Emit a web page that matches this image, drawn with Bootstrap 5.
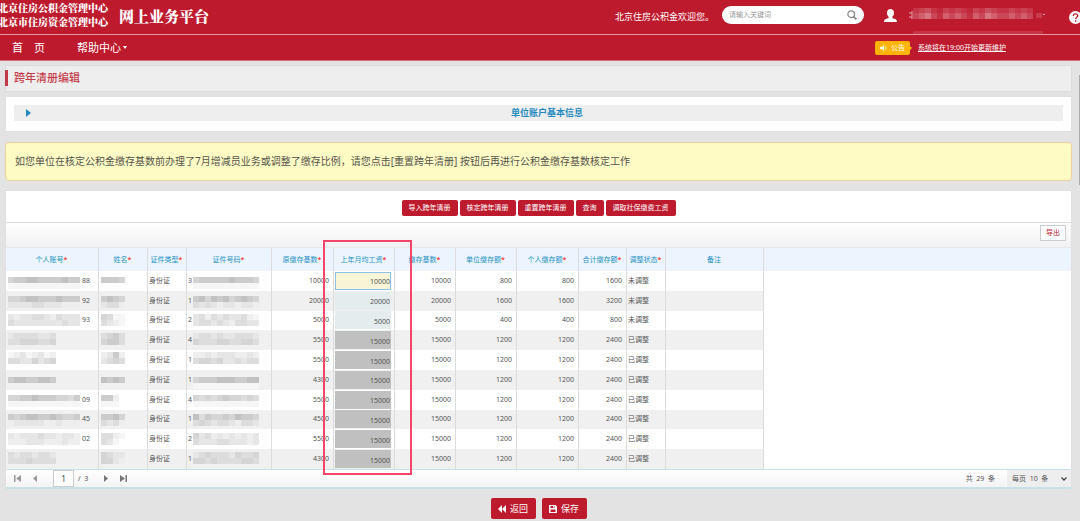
<!DOCTYPE html>
<html lang="zh-CN">
<head>
<meta charset="utf-8">
<meta name="viewport" content="width=device-width, initial-scale=1">
<title>跨年清册编辑</title>
<link href="https://cdn.jsdelivr.net/npm/bootstrap@5.3.0/dist/css/bootstrap.min.css" rel="stylesheet">
<style>
  :root { --red: #bd1a2d; --text: #555; --line: #dcdcdc; --pale: #c9e1ea; }
  body { background: #e3e3e3; color: var(--text); overflow-x: hidden; font: 7px/16px "Noto Sans", "Noto Sans CJK SC", sans-serif; }
  .masthead { background: var(--red); color: #fff; height: 35px; border-bottom: 1px solid #e59aa2; overflow: hidden; }
  .org { font: 900 10px/14px "Noto Serif CJK SC", "Noto Sans CJK SC", serif; margin: -4px 0 0 -2px; white-space: nowrap; }
  .platform { font: 900 15px/20px "Noto Serif CJK SC", "Noto Sans CJK SC", serif; white-space: nowrap; margin: -3px 0 0 11px; }
  .greeting { font-size: 9px; white-space: nowrap; width: 107px; }
  .searchbox { width: 142px; height: 18px; background: #fff; border-radius: 9px; padding: 0 7px; }
  .searchbox input { font-size: 7px; line-height: 16px; min-width: 0; }
  .searchbox input::placeholder { color: #999; opacity: 1; }
  .helpmark { margin: 0 -2px 0 20px; }
  .mainnav { background: var(--red); height: 26px; border-bottom: 1px solid #d0707b; }
  .mainnav a { color: #fff; font-size: 11px; line-height: 16px; text-decoration: none; white-space: nowrap; }
  .mainnav .notice { font-size: 7px; text-decoration: underline; width: 162px; }
  .tag-notice { background: #ffb400; color: #fff; border-radius: 2px; width: 35px; height: 14px; line-height: 14px; position: relative; }
  .tag-notice::after { content: ""; position: absolute; left: 35px; top: 5px; border: 2px solid transparent; border-left-color: #ffb400; }
  .caret-s { border: 2px solid transparent; border-top: 3px solid #fff; border-bottom: 0; margin-left: 2px; }
  .keep-space { white-space: pre; }
  .page-body { padding: 4px 8px 0 5px; }
  .titlebar { background: #eee; border: 1px solid #dcdcdc; height: 27px; padding-top: 4px; }
  .titlebar h1 { color: var(--red); opacity: .85; font-size: 11px; line-height: 16px; border-left: 3px solid var(--red); padding-left: 6px; margin: 0 0 0 -1px; }
  .panel { background: #fff; border: 1px solid #e0e0e0; }
  .fold { background: #eee; color: #1f8abf; font-size: 9px; font-weight: 700; line-height: 16px; height: 16px; margin-bottom: 2px; }
  .tip { background: #fffbc4; border: 1px solid #f0cfa0; border-radius: 4px; height: 39px; margin: 10px 0 9px; padding: 0 0 2px 9px; font-size: 10px; color: #55554c; }
  .actions { gap: 2px; padding: 9px 0 6px; }
  .red-btn { background: var(--red); color: #fff; border: 0; border-radius: 2px; padding: 0 7px; height: 16px; line-height: 16px; }
  .big-btn { width: 45px; height: 21px; font-size: 9px; padding: 0; }
  .footer-actions { gap: 6px; margin-top: 9px; padding-bottom: 2px; }
  .toolbar { height: 26px; border-top: 1px solid #ddd; border-bottom: 1px solid #e8e8e8; background: linear-gradient(#fff, #f1f1f3); padding: 0 5px 4px 0; }
  .export { border: 1px solid #ccc; background: #fff; color: var(--red); width: 26px; height: 16px; line-height: 14px; padding: 0; }
  .gridwrap { background: linear-gradient(#ecf5fd 23px, #fff 23px); }
  .ledger { table-layout: fixed; border-collapse: separate; border-spacing: 0; width: 758px; height: 221px; color: var(--text); }
  .ledger th { color: #2592c4; font-weight: 400; text-align: center; height: 23px; }
  .ledger th i { color: red; font-style: normal; }
  .ledger th, .ledger td { padding: 0 2px 0 1px; border-right: 1px solid var(--line); white-space: nowrap; overflow: hidden; }
  .ledger tbody tr { background: #fff; }
  .ledger tbody tr:nth-child(even) { background: #f0f0f0; }
  .ledger td.num { text-align: right; padding-right: 4px; }
  .ledger input { display: block; width: 56px; height: 18px; padding: 2px 1px 0 0; border: 0; text-align: right; background: #e4ecee; color: inherit; }
  .ledger input:disabled { background: #c0c0c0; }
  .ledger input.active { background: #f7f5d6; border: 1px solid #8ec1ea; padding: 2px 0 0; }
  .pager { height: 20px; border: 1px solid var(--pale); border-width: 1px 0 2px; background: linear-gradient(#fff, #f3f3f3); }
  .pager button { border: 0; background: none; padding: 0; line-height: 0; }
  .pager input { width: 21px; height: 17px; border: 1px solid #ccc; text-align: center; font-size: 9px; padding: 0; color: var(--text); }
  .pager select { appearance: none; border: 0; background: #eee; height: 17px; width: 64px; padding: 0 5px; color: var(--text); }
  .frame-mark { position: absolute; left: 317px; top: 18px; width: 89px; height: 235px; border: 2px solid #f5456a; pointer-events: none; }
  .scroll-thumb { position: absolute; right: 0; top: 75px; width: 1px; height: 110px; background: #aaa; }
  svg { display: block; flex: none; }
</style>
</head>
<body>
<header class="masthead d-flex align-items-center">
  <div class="org">北京住房公积金管理中心<br>北京市住房资金管理中心</div>
  <div class="platform">网上业务平台</div>
  <div class="greeting ms-auto">北京住房公积金欢迎您。</div>
  <label class="searchbox d-flex align-items-center mb-1">
    <input class="border-0 bg-transparent p-0 flex-grow-1" type="search" placeholder="请输入关键词" aria-label="搜索">
    <svg width="10" height="10" viewBox="0 0 10 10" fill="none" stroke="#888" stroke-width="1.3"><circle cx="4.2" cy="4.2" r="3.3"/><path d="M6.6 6.6 9.4 9.4" stroke-width="1.8"/></svg>
  </label>
  <svg class="ms-3 me-2 px-1 mb-1" width="21" height="13" viewBox="0 0 13 13" fill="#fff"><path d="M6.500 0C8.500 0 10 1.500 10 3.800 10 5.600 9.300 7 8.300 7.900V9l3.300 1.300C12.700 10.800 13 12 13 13H0c0-1 .3-2.200 1.400-2.700L4.700 9V7.900C3.700 7 3 5.600 3 3.800 3 1.500 4.500 0 6.500 0Z"/></svg>
  <svg id="userMask" width="140" height="34" aria-hidden="true"></svg>
  <svg class="helpmark" width="13" height="13" viewBox="0 0 13 13"><circle cx="6.500" cy="6.500" r="6.500" fill="#fff"/><path d="M4.300 5C4.300 3.500 5.200 2.800 6.500 2.800S8.800 3.600 8.800 4.800C8.800 6.200 6.600 6.300 6.600 8.100M6.600 9.300V10.700" fill="none" stroke="#bd1a2d" stroke-width="1.300"/></svg>
</header>
<nav class="mainnav d-flex align-items-center">
  <a href="#" class="ms-2 ps-1 keep-space">首　页</a>
  <a href="#" class="ms-4 ps-2 d-flex align-items-center">帮助中心<span class="caret-s"></span></a>
  <span class="tag-notice ms-auto me-2 d-flex align-items-center justify-content-center gap-1">
    <svg width="7" height="6" viewBox="0 0 7 6"><path d="M0 2h1.500L4 0v6L1.500 4H0Z" fill="#fff"/><path d="M5 1.200Q7 3 5 4.800" fill="none" stroke="#fff" stroke-width=".8"/></svg>公告</span>
  <a href="#" class="notice">系统将在19:00开始更新维护</a>
</nav>
<main class="page-body">
  <div class="titlebar"><h1>跨年清册编辑</h1></div>
  <section class="panel mt-1 px-2 pt-2 pb-2">
    <div class="fold d-flex align-items-center">
      <svg class="ms-2 ps-1" width="9" height="8" viewBox="0 0 5 8"><path d="M0 0 5 4 0 8Z" fill="#1f8abf"/></svg>
      <span class="flex-grow-1 text-center">单位账户基本信息</span>
    </div>
  </section>
  <div class="tip d-flex align-items-center" role="alert">如您单位在核定公积金缴存基数前办理了7月增减员业务或调整了缴存比例，请您点击[重置跨年清册] 按钮后再进行公积金缴存基数核定工作</div>
  <section class="panel border-bottom-0">
    <div class="d-flex justify-content-center actions">
      <button class="red-btn">导入跨年清册</button>
      <button class="red-btn">核定跨年清册</button>
      <button class="red-btn">重置跨年清册</button>
      <button class="red-btn">查询</button>
      <button class="red-btn">调取社保缴费工资</button>
    </div>
    <div class="position-relative">
      <div class="toolbar d-flex align-items-center justify-content-end"><button class="export">导出</button></div>
      <div class="gridwrap">
        <table class="ledger">
          <colgroup id="cols"></colgroup>
          <thead><tr>
            <th>个人账号<i>*</i></th><th>姓名<i>*</i></th><th>证件类型<i>*</i></th><th>证件号码<i>*</i></th><th>原缴存基数<i>*</i></th><th>上年月均工资<i>*</i></th><th>缴存基数<i>*</i></th><th>单位缴存额<i>*</i></th><th>个人缴存额<i>*</i></th><th>合计缴存额<i>*</i></th><th>调整状态<i>*</i></th><th>备注</th>
          </tr></thead>
          <tbody id="rows"></tbody>
        </table>
      </div>
      <div class="frame-mark"></div>
      <div class="pager d-flex align-items-center">
        <button class="ms-1 ps-1" aria-label="首页"><svg width="7" height="7" fill="#999"><path d="M0 0h1.500v7H0zM7 0v7L2 3.500z"/></svg></button>
        <button class="ms-2 ps-1" aria-label="上一页"><svg width="4" height="7" fill="#999"><path d="M4 0v7L0 3.500z"/></svg></button>
        <input class="ms-3" value="1" aria-label="页码">
        <span class="ms-1 me-3 keep-space">/  3</span>
        <button aria-label="下一页"><svg width="4" height="7" fill="#777"><path d="M0 0v7L4 3.500z"/></svg></button>
        <button class="ms-2 ps-1" aria-label="末页"><svg width="7" height="7" fill="#777"><path d="M0 0v7L5 3.500zM5.500 0H7v7H5.500z"/></svg></button>
        <span class="ms-auto me-2 pe-1 keep-space">共  29  条</span>
        <span class="position-relative">
          <select aria-label="每页条数"><option>每页&nbsp; 10&nbsp; 条</option></select>
          <svg class="position-absolute end-0 top-50 translate-middle-y me-1" width="6" height="4" fill="none" stroke="#444" stroke-width="1.300"><path d="M.5.5 3 3 5.500.5"/></svg>
        </span>
      </div>
    </div>
  </section>
  <div class="d-flex justify-content-center footer-actions">
    <button class="red-btn big-btn d-flex align-items-center justify-content-center gap-1"><svg width="8" height="8" fill="#fff"><path d="M4 0v8L0 4zM8 0v8L4 4z"/></svg>返回</button>
    <button class="red-btn big-btn d-flex align-items-center justify-content-center gap-1"><svg width="8" height="8" fill="#fff" fill-rule="evenodd"><path d="M0 0h6.500L8 1.500V8H0zM1.500 1v2h4V1zM1.500 4.500V7h5V4.500z"/><path d="M4 1h1v1.500H4z"/></svg>保存</button>
  </div>
</main>
<div class="scroll-thumb"></div>
<script src="https://cdn.jsdelivr.net/npm/bootstrap@5.3.0/dist/js/bootstrap.bundle.min.js"></script>
<script>
  // Shades for masked personal data, darkest to lightest; "." leaves a gap.
  const shade = { a: '#c2c2c2', b: '#cccccc', c: '#d5d5d5', d: '#dddddd', e: '#e6e6e6', f: '#eeeeee', g: '#f6f6f6' };
  const mask = (lines, top, width) => `<svg width="${width}" height="18" aria-hidden="true">` + lines.map((line, r) =>
    [...line].map((c, i) => shade[c] ? `<rect x="${1 + i * 6}" y="${top + r * 6}" width="6" height="6" fill="${shade[c]}"/>` : '').join('')).join('') + '</svg>';

  document.getElementById('cols').innerHTML =
    [93, 49, 39, 85, 62, 61, 61, 61, 62, 48, 39, 98].map(w => `<col style="width:${w}px">`).join('');

  // account mask, account tail, name mask, id first digit, id mask, mask top, old base, wage, share, total
  const data = [
    [['cbbaabbbbabb', 'gggggggggggg'], '88', ['bbbc'], '3', ['cbbbbbabbbc', 'ggggggggggg'], 5, 10000, 10000, 800, 1600],
    [['ccbaabbbabbb', 'eeeeddeeefff'], '92', ['babc', 'eddf'], '1', ['bacabacbabc', 'dedefeefeef'], 4, 20000, 20000, 1600, 3200],
    [['efeeddefdeee', 'deeeeeeeedee'], '93', ['cdgg', 'defg'], '2', ['edfdedeedfg', 'eddedefddee'], 3, 5000, 5000, 400, 800],
    [['eddddeed', 'ddcccddc'], '', ['dcbd', 'cbbd'], '4', ['eddedeeddde', 'cdddccddccd'], 2, 5500, 15000, 1200, 2400],
    [['gfegfegf', 'ddeecedc'], '', ['febf', 'edcd'], '1', ['ffefeeeffef', 'dccdceededd'], 1, 5500, 15000, 1200, 2400],
    [['baabbaab'], '', ['abab'], '1', ['cbbbaaabbaa', 'ggggggggggg'], 6, 4300, 15000, 1200, 2400],
    [['ccbbabbbccdb', 'gggggggggggg'], '09', ['bbf.', 'ggg.'], '4', ['cdcdcbccdcd', 'ggggggggggg'], 4, 5500, 15000, 1200, 2400],
    [['bcbaabbabccb', 'feeeeeffefff'], '45', ['bbac', 'dedf'], '1', ['adbccbcabbc', 'dcdeddefdde'], 4, 4500, 15000, 1200, 2400],
    [['efeeedeefeef', 'fffeeefffeff'], '02', ['ddfg', 'deg.'], '2', ['cedfefefefe', 'deeeddeeefe'], 3, 5500, 15000, 1200, 2400],
    [['deddedde', 'dddcdddd'], '', ['cdee', 'ccef'], '1', ['edcdddecddc', 'ccdcddddccd'], 2, 4300, 15000, 1200, 2400]
  ];
  document.getElementById('rows').innerHTML = data.map((d, i) => {
    const [acc, tail, name, first, id, top, old, base, share, total] = d;
    const control = `<input value="${base}" aria-label="上年月均工资"${i === 0 ? ' class="active"' : i > 2 ? ' disabled' : ''}>`;
    return `<tr><td><div class="d-flex align-items-center">${mask(acc, top, 75)}<span>${tail}</span></div></td>
      <td>${mask(name, top, 26)}</td><td>身份证</td>
      <td><div class="d-flex align-items-center"><span>${first}</span>${mask(id, top, 74)}</div></td>
      <td class="num">${old}</td><td>${control}</td><td class="num">${base}</td><td class="num">${share}</td>
      <td class="num">${share}</td><td class="num">${total}</td><td>${i < 3 ? '未调整' : '已调整'}</td><td></td></tr>`;
  }).join('');

  // Masked user name in the header.
  document.getElementById('userMask').innerHTML = [2, 3, 4, 2, 1, 3, 2, 3, 2, 1, 3, 2, 4, 3, 2, 2, 3, 2, 3, 2].map((v, i) =>
    `<rect x="${4 + i * 6}" y="8" width="6" height="5" fill="#fff" opacity="${v * 0.06}"/><rect x="${4 + i * 6}" y="13" width="6" height="6" fill="#fff" opacity="${v * 0.1}"/>`).join('')
    + '<rect x="127" y="13" width="6" height="5" fill="#fff" opacity=".15"/><rect x="134" y="14" width="2" height="1" fill="#fff" opacity=".6"/><rect x="4" y="31" width="130" height="3" fill="#fff" opacity=".12"/><path d="M0 13h3M0 17h3M3 11v8" stroke="#fff" opacity=".6"/>';
</script>
</body>
</html>
